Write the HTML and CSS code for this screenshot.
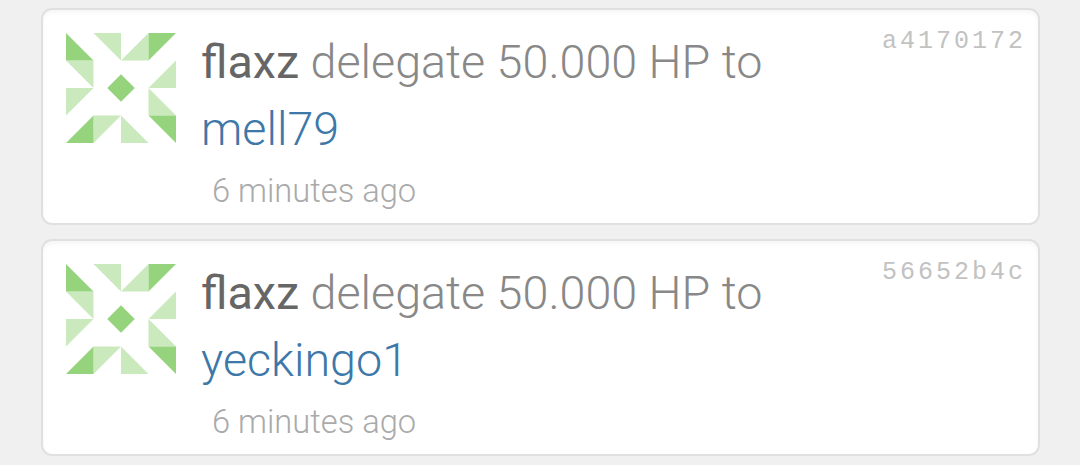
FILE: index.html
```html
<!DOCTYPE html>
<html lang="en">
<head>
    <meta charset="UTF-8">
    <meta name="viewport" content="width=device-width, initial-scale=1.0">
    <title>Operations</title>
    <link rel="stylesheet" href="styles.css">
</head>
<body>
    <!-- Shared avatar -->
    <svg class="defs" width="0" height="0">
        <symbol id="avatar" viewBox="0 0 4 4">
            <path fill="#cae9bd" d="M1 0H2V1ZM3 0V1H2ZM0 1H1V2ZM4 1V2H3ZM0 2H1L0 3ZM3 2L4 3H3ZM1 3H2L1 4ZM2 3L3 4H2Z"/>
            <path fill="#96d37d" d="M0 0L1 1H0ZM3 0H4L3 1ZM0 4L1 3V4ZM3 3H4V4ZM2 1.5L2.5 2L2 2.5L1.5 2Z"/>
        </symbol>
    </svg>
    <div class="operations">
        <div class="operation">
            <svg class="avatar"><use href="#avatar"/></svg>
            <div class="details">
                <div class="action"><strong>flaxz</strong> delegate 50.000 HP to <a href="#">mell79</a></div>
                <div class="time">6 minutes ago</div>
            </div>
            <div class="hash">a4170172</div>
        </div>
        <div class="operation">
            <svg class="avatar"><use href="#avatar"/></svg>
            <div class="details">
                <div class="action"><strong>flaxz</strong> delegate 50.000 HP to <a href="#">yeckingo1</a></div>
                <div class="time">6 minutes ago</div>
            </div>
            <div class="hash">56652b4c</div>
        </div>
    </div>
</body>
</html>
```
FILE: styles.css
```css
* {
    box-sizing: border-box;
}
body {
    margin: 0;
    background-color: #f0f0f0;
    font-family: Roboto, sans-serif;
    font-weight: 300;
    color: #888;
    overflow: hidden;
}
.defs {
    display: block;
}
.operations {
    display: flex;
    flex-direction: column;
    gap: 14px;
    padding: 8px 40px 0 41px;
}
.operation {
    display: flex;
    align-items: flex-start;
    height: 217px;
    padding: 0 12px 0 23px;
    background: #fff;
    border: 2px solid #e0e0e0;
    border-radius: 11px;
    box-shadow: inset 0 3px 4px rgba(0, 0, 0, 0.04);
}
.avatar {
    flex: none;
    width: 110px;
    height: 110px;
    margin-top: 23px;
}
.details {
    width: 600px;
    margin: 19px auto 0 25px;
}
.action {
    font-size: 46.67px;
    line-height: 67px;
}
strong {
    font-weight: 450;
    color: #666;
}
a {
    color: #3d78a8;
    text-decoration: none;
}
.time {
    margin-top: 5px;
    padding-left: 11px;
    font-size: 32.67px;
    line-height: 47px;
    color: #aaa;
}
.hash {
    margin-top: 16px;
    font-family: "Liberation Mono", monospace;
    font-size: 25px;
    line-height: 32px;
    letter-spacing: 3px;
    color: #c2c2c2;
}
```
